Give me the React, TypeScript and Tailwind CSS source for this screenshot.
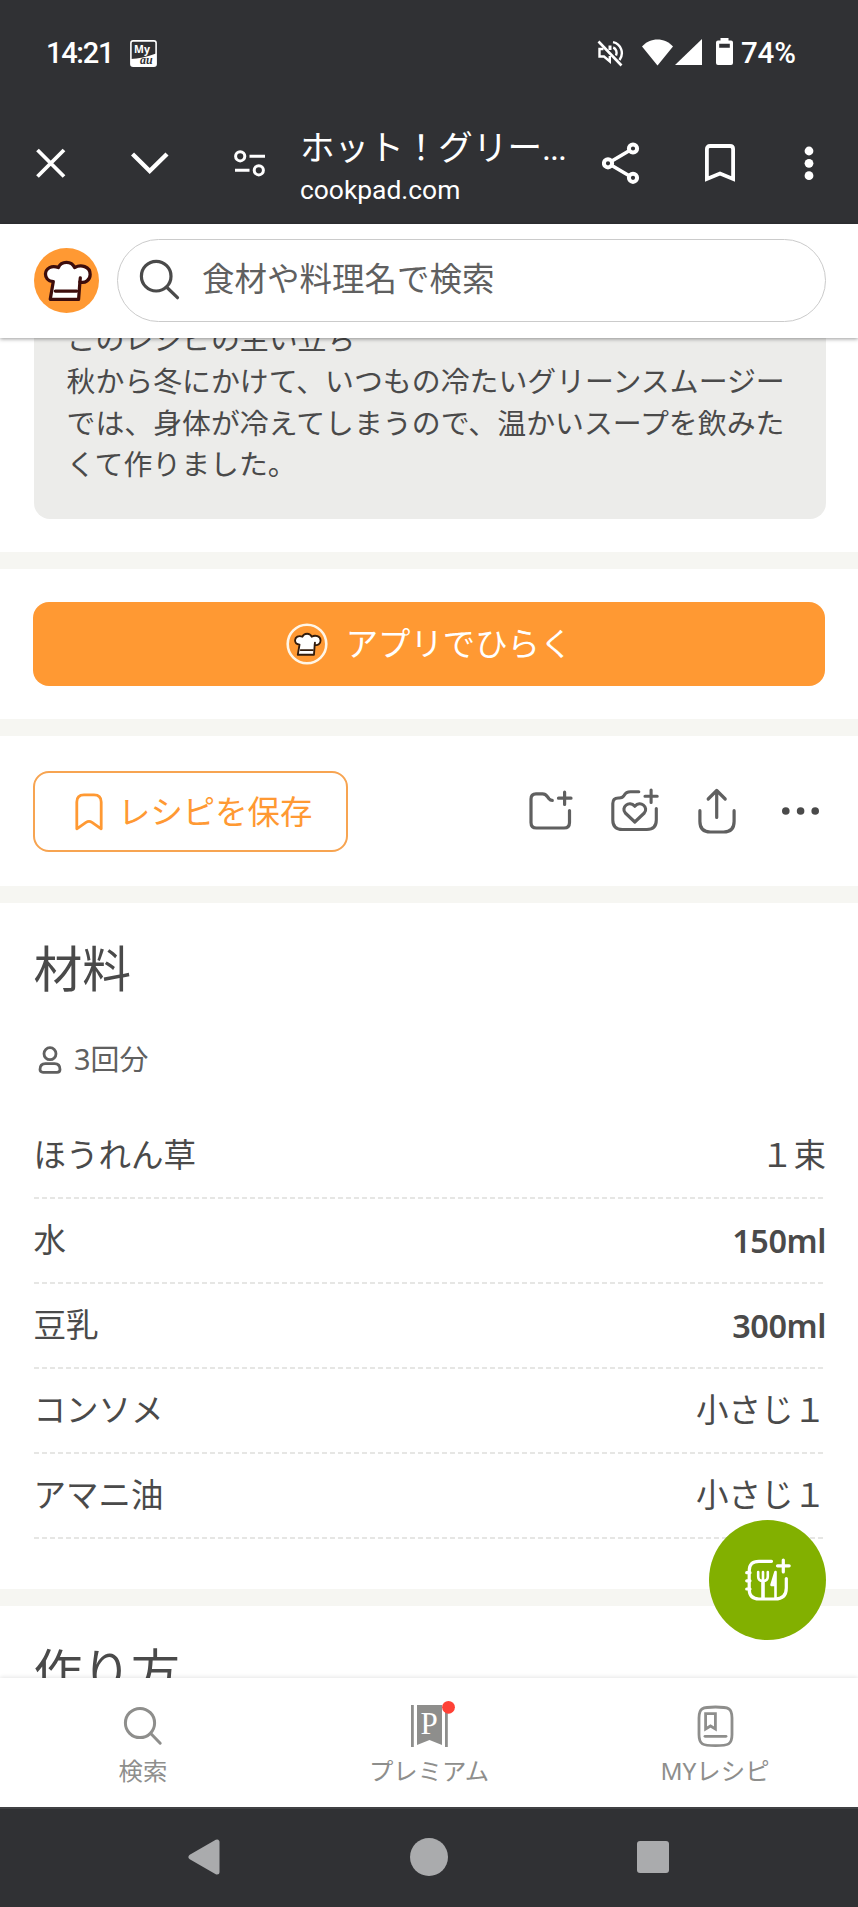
import React from 'react';

type Ingredient = {
  name: string;
  amount: string;
  bold?: boolean;
};

const INGREDIENTS: Ingredient[] = [
  { name: 'ほうれん草', amount: '１束' },
  { name: '水', amount: '150ml', bold: true },
  { name: '豆乳', amount: '300ml', bold: true },
  { name: 'コンソメ', amount: '小さじ１' },
  { name: 'アマニ油', amount: '小さじ１' },
];

function ChefHat({ stroke }: { stroke: string }) {
  return (
    <g stroke={stroke} strokeWidth="3.2" strokeLinejoin="round">
      <path
        fill="#fff"
        d="M16 50.5 L19 33 C13 32.5 11.3 28.5 11.3 25.5 C11.5 20 17.5 16.5 24 19.3 C25.5 15.8 28.5 14.2 32 14.2 C35.5 14.2 38.5 16 40 19.3 C46 15.8 55.3 18 55.3 26 C55.3 31.5 50.5 35 45.2 33.5 L43.9 50.5 Z"
      />
      <path fill="none" strokeLinecap="round" d="M21 42.4 H42 M45.2 33.5 L45.6 29.5" />
    </g>
  );
}

function StatusBar() {
  return (
    <div className="flex h-[104px] items-start pt-[36px] pl-[46px] pr-[57px] text-white">
      <span className="w-[84px] text-[29px] leading-[34px] font-medium tracking-[-1.3px]">14:21</span>
      <svg width="27" height="27" viewBox="0 0 27 27" className="mt-1">
        <rect x="0.9" y="0.9" width="25.2" height="25.2" rx="2.2" fill="none" stroke="#fff" strokeWidth="1.6" />
        <path d="M0.9 19 C8 19 17 17 26.1 13.6 V26.1 H0.9 Z" fill="#fff" />
        <text x="4" y="12.8" fill="#fff" fontSize="10.5" fontWeight="700" fontFamily="Open Sans, sans-serif">My</text>
        <text x="10" y="23.8" fill="#303134" fontSize="12" fontStyle="italic" fontWeight="700" fontFamily="Liberation Serif, serif">au</text>
      </svg>
      <svg width="27" height="27" viewBox="0 0 27 27" className="mt-1 ml-auto" fill="none" stroke="#fff" strokeWidth="2.4">
        <path d="M1.5 1.5 L24.5 25.5" strokeWidth="2.6" />
        <path d="M6.5 9 H2.5 V16.5 H7 L12.8 21.5 V16" />
        <path d="M13 5.5 V10" strokeWidth="3" />
        <path d="M16 2.2 C24 4 27.5 13 22.5 20" />
        <path d="M16.2 7.5 C19 8.5 20.5 12 19 15.5" />
      </svg>
      <svg width="31" height="27" viewBox="0 0 31 27" className="mt-[3px] ml-[18px]">
        <path d="M0 7.5 C8 -2 23 -2 31 7.5 L15.5 26.5 Z" fill="#fff" />
      </svg>
      <svg width="27" height="26" viewBox="0 0 27 26" className="mt-[3px] ml-[2px]">
        <path d="M27 0 V26 H0 Z" fill="#fff" />
      </svg>
      <svg width="17" height="27" viewBox="0 0 17 27" className="mt-[2px] ml-[14px]">
        <path
          fillRule="evenodd"
          fill="#fff"
          d="M4.5 0 H12.5 V2.6 H15 Q17 2.6 17 4.6 V25 Q17 27 15 27 H2 Q0 27 0 25 V4.6 Q0 2.6 2 2.6 H4.5 Z M3.2 5.8 V9.8 H13.8 V5.8 Z"
        />
      </svg>
      <span className="ml-[8px] w-[60px] text-[29.5px] leading-[34px] font-medium tracking-[-0.2px] whitespace-nowrap">74%</span>
    </div>
  );
}

function BrowserToolbar() {
  return (
    <div className="flex h-[120px] items-start pl-[36px] text-white">
      <svg width="30" height="30" viewBox="0 0 30 30" className="mt-[44px]">
        <path d="M1.5 2 L28 28.5 M28 2 L1.5 28.5" stroke="#fff" strokeWidth="3.8" />
      </svg>
      <svg width="38" height="23" viewBox="0 0 38 23" className="mt-[48px] ml-[65px]">
        <path d="M1.5 2 L18.7 19 L36 2" fill="none" stroke="#fff" strokeWidth="4.4" />
      </svg>
      <svg width="32" height="27" viewBox="0 0 32 27" className="mt-[46px] ml-[65px]" fill="none" stroke="#fff" strokeWidth="3">
        <circle cx="6.2" cy="6.3" r="4.6" />
        <path d="M15.5 6.3 H31 M1 20.3 H15.5" />
        <circle cx="24.8" cy="20.3" r="4.6" />
      </svg>
      <div className="mt-[21px] ml-[34px] flex w-[302px] flex-col whitespace-nowrap">
        <span className="text-[34.6px] leading-[46px] font-[Roboto,'Noto_Sans_CJK_JP',sans-serif]">
          ホット！グリー<span className="tracking-[-1.2px]">...</span>
        </span>
        <span className="mt-[3px] text-[26.4px] leading-[32px]">cookpad.com</span>
      </div>
      <svg width="38" height="43" viewBox="0 0 38 43" className="mt-[38px]" fill="none" stroke="#fff" strokeWidth="4">
        <path d="M6 21.3 L31 6.5 M6 21.3 L31 36" strokeWidth="3.6" />
        <circle cx="6" cy="21.3" r="4.1" fill="#303134" />
        <circle cx="31" cy="6.5" r="4.1" fill="#303134" />
        <circle cx="31" cy="35.8" r="4.1" fill="#303134" />
      </svg>
      <svg width="30" height="38" viewBox="0 0 30 38" className="mt-[40px] ml-[65px]">
        <path d="M1.9 35 V5 Q1.9 2 5 2 H25 Q28.1 2 28.1 5 V35 L15 29.5 Z" fill="none" stroke="#fff" strokeWidth="3.8" />
      </svg>
      <svg width="10" height="36" viewBox="0 0 10 36" className="mt-[41px] ml-[69px]" fill="#fff">
        <circle cx="5" cy="6" r="4.4" />
        <circle cx="5" cy="18.3" r="4.4" />
        <circle cx="5" cy="30.7" r="4.4" />
      </svg>
    </div>
  );
}

function SearchHeader() {
  return (
    <header className="relative z-10 flex h-[114px] shrink-0 items-start bg-white pl-[34px] shadow-[0_1px_4px_rgba(0,0,0,0.4)]">
      <svg width="65" height="65" viewBox="0 0 64 64" className="mt-[24px]">
        <circle cx="32" cy="32" r="32" fill="#ff9933" />
        <ChefHat stroke="#3d0d0c" />
      </svg>
      <div className="mt-[15px] ml-[18px] flex h-[83px] w-[709px] items-center rounded-full border-[1.5px] border-[#cbcbcb] bg-white pl-[21px]">
        <svg width="41" height="41" viewBox="0 0 41 41" fill="none" stroke="#4a4a4a" strokeWidth="3.2" strokeLinecap="round" className="-mt-[2px]">
          <circle cx="17.2" cy="17.2" r="14.8" />
          <path d="M28 28.5 L38.5 38.7" />
        </svg>
        <span className="-mt-[3px] ml-[22px] text-[32.5px] leading-[48px] text-[#606060]">食材や料理名で検索</span>
      </div>
    </header>
  );
}

function ActionIcons() {
  return (
    <div className="ml-auto flex items-start text-[#606060]">
      <svg width="44" height="46" viewBox="0 0 44 46" fill="none" stroke="currentColor" strokeWidth="3.2" strokeLinecap="round" strokeLinejoin="round">
        <path d="M40.5 22.5 V34.5 Q40.5 40 35 40 H7.5 Q2 40 2 34.5 V11 Q2 5.8 7 5.8 H13.5 Q16.5 5.8 18.3 8.5 L20 10.8 Q21.3 12.4 23.3 12.4" />
        <path d="M29.5 10.2 H42 M35.6 4.2 V16.5" />
      </svg>
      <svg width="48" height="46" viewBox="0 0 48 46" fill="none" stroke="currentColor" strokeWidth="3.1" strokeLinecap="round" strokeLinejoin="round" className="ml-[38px]">
        <path d="M45.3 20.5 V32 Q45.3 41.5 35.8 41.5 H11.3 Q1.8 41.5 1.8 32 V15.5 Q1.8 10 7.3 10 Q11.5 10.3 13.2 7.3 Q15 3.8 19.5 3.8 H27.8" />
        <path d="M34 8.2 H46.2 M40.1 2 V14.5" />
        <path d="M23.8 34 L14.3 25 C9.5 19.5 18 11.8 23.8 18.3 C29.5 11.8 38 19.5 33.3 25 Z" />
      </svg>
      <svg width="38" height="46" viewBox="0 0 38 46" fill="none" stroke="currentColor" strokeWidth="3.2" strokeLinecap="round" strokeLinejoin="round" className="ml-[39px]">
        <path d="M1.9 22.7 V33.5 Q1.9 44 12.4 44 H25.6 Q36.1 44 36.1 33.5 V22.7" />
        <path d="M18.7 29.5 V2.5 M10.2 11 L18.7 2.5 L27.2 11" />
      </svg>
      <svg width="40" height="46" viewBox="0 0 40 46" fill="#4a4a4a" className="ml-[45px]">
        <circle cx="4.8" cy="23" r="3.8" />
        <circle cx="19.6" cy="23" r="3.8" />
        <circle cx="34.2" cy="23" r="3.8" />
      </svg>
    </div>
  );
}

function TabBar() {
  return (
    <nav className="relative z-10 grid h-[129px] shrink-0 grid-cols-3 bg-white pt-[27px] text-[24.4px] leading-[34px] text-[#8e8e8c] shadow-[0_-1px_4px_rgba(0,0,0,0.1)]">
      <div className="flex flex-col items-center">
        <svg width="40" height="42" viewBox="0 0 40 42" fill="none" stroke="currentColor" strokeWidth="3" strokeLinecap="round">
          <circle cx="17" cy="18" r="14.6" />
          <path d="M28 28.8 L37.2 38.2" />
        </svg>
        <span className="mt-[7px]">検索</span>
      </div>
      <div className="flex flex-col items-center">
        <svg width="54" height="48" viewBox="0 0 54 48" className="-mt-[6px] overflow-visible">
          <path d="M9 6 H11.8 V48 H9 Z M43 6 H45.8 V48 H43 Z M15 6 H40 V46 L27.5 41 L15 46 Z" fill="currentColor" />
          <text x="18.5" y="35" fontSize="31" fill="#fff" fontFamily="Liberation Serif, serif">P</text>
          <circle cx="46.5" cy="8.3" r="6.4" fill="#ff4136" />
        </svg>
        <span className="mt-[7px]">プレミアム</span>
      </div>
      <div className="flex flex-col items-center">
        <svg width="37" height="42" viewBox="0 0 37 42" fill="none" stroke="currentColor" strokeWidth="2.8" strokeLinejoin="round">
          <path d="M18.5 2 C31.5 2 35 3 35 13 V29.6 C35 39.6 31.5 40.6 18.5 40.6 C5.5 40.6 2 39.6 2 29.6 V13 C2 3 5.5 2 18.5 2 Z" />
          <path d="M8.6 8.7 H18.4 V24 L13.5 21 L8.6 24 Z" strokeLinejoin="miter" />
          <path d="M8 31.3 H29" strokeLinecap="round" />
        </svg>
        <span className="mt-[7px]">MYレシピ</span>
      </div>
    </nav>
  );
}

export default function App() {
  return (
    <div className="relative flex h-[1907px] w-[858px] flex-col overflow-hidden bg-white font-['Noto_Sans','Noto_Sans_CJK_JP',sans-serif] text-[#4a4a4a]" lang="ja">
      <div className="shrink-0 bg-[#303134] font-[Roboto,'Noto_Sans_CJK_JP',sans-serif]">
        <StatusBar />
        <BrowserToolbar />
      </div>
      <SearchHeader />

      <main className="h-[1340px] shrink-0 overflow-hidden">
        <div className="mr-[32px] ml-[33.5px] -mt-[40px] h-[221px] rounded-2xl bg-[#ececea] pt-[20px] pl-[33px] text-[28.9px] leading-[41.8px] whitespace-nowrap">
          <p>このレシピの生い立ち</p>
          <p>秋から冬にかけて、いつもの冷たいグリーンスムージー</p>
          <p>では、身体が冷えてしまうので、温かいスープを飲みた</p>
          <p>くて作りました。</p>
        </div>

        {/* Open in app */}
        <section className="mt-[33px] border-y-[17px] border-[#f6f6f2] px-[33px] py-[33px]">
          <button className="flex h-[84px] w-full items-center justify-center rounded-2xl bg-[#ff9933] text-[32.4px] text-white">
            <svg width="42" height="42" viewBox="0 0 42 42">
              <circle cx="21" cy="21" r="19.3" fill="none" stroke="#fff6e8" strokeWidth="2.6" />
              <g transform="translate(2.5 2.5) scale(0.58)">
                <ChefHat stroke="#331c0c" />
              </g>
            </svg>
            <span className="-mt-[1px] ml-[18px]">アプリでひらく</span>
          </button>
        </section>

        {/* Save and share actions */}
        <section className="flex h-[150px] items-start px-[33px] pt-[35px]">
          <button className="flex h-[81px] w-[315px] items-center rounded-2xl border-2 border-[#f7a451] pl-[40px] text-[32.4px] text-[#ff9933]">
            <svg width="28" height="38" viewBox="0 0 28 38">
              <path d="M1.8 35.8 V9 Q1.8 1.8 9 1.8 H19 Q26.2 1.8 26.2 9 V35.8 L17 29.3 Q14 27.3 11 29.3 Z" fill="none" stroke="currentColor" strokeWidth="2.8" strokeLinejoin="round" />
            </svg>
            <span className="ml-[15px]">レシピを保存</span>
          </button>
          <div className="ml-auto pt-[17px] pr-[4px]">
            <ActionIcons />
          </div>
        </section>

        {/* Ingredients */}
        <section className="h-[720px] border-y-[17px] border-[#f6f6f2] pr-[32px] pl-[33.5px]">
          <h2 className="mt-[31px] text-[48.8px] leading-[68px]">材料</h2>
          <div className="mt-[36px] flex h-[44px] items-center text-[28.9px] text-[#606060]">
            <svg width="24" height="28" viewBox="0 0 24 28" fill="none" stroke="currentColor" strokeWidth="2.8" className="-mt-[1px] ml-[4.5px]">
              <circle cx="12" cy="7.7" r="6" />
              <path d="M7.5 17.6 H16.5 Q22 17.6 22 23.5 Q22 26.3 19 26.3 H5 Q2 26.3 2 23.5 Q2 17.6 7.5 17.6 Z" />
            </svg>
            <span className="-mt-[3px] ml-[12px]">3回分</span>
          </div>
          <ul className="mt-[32px]">
            {INGREDIENTS.map((item, i) => (
              <li
                key={i}
                className="flex h-[85px] items-center justify-between bg-[repeating-linear-gradient(90deg,#e6e6e4_0_5px,transparent_5px_8px)] bg-[length:100%_2px] bg-bottom bg-no-repeat pb-[2px] text-[32.5px]"
              >
                <span>{item.name}</span>
                <span className={item.bold ? 'text-[32.4px] font-semibold tracking-[-0.4px]' : ''}>{item.amount}</span>
              </li>
            ))}
          </ul>
        </section>

        {/* Steps */}
        <section className="pt-[31px] pl-[33.5px]">
          <h2 className="text-[48.8px] leading-[68px]">作り方</h2>
        </section>
      </main>

      <TabBar />

      {/* System navigation */}
      <div className="relative z-10 flex h-[100px] shrink-0 items-center border-t-2 border-[#404144] bg-[#303134] pb-[2px] pl-[188px]">
        <svg width="32" height="36" viewBox="0 0 32 36">
          <path d="M3 18 L29 3 V33 Z" fill="#aaabad" stroke="#aaabad" strokeWidth="5" strokeLinejoin="round" />
        </svg>
        <div className="ml-[190px] h-[38px] w-[38px] rounded-full bg-[#aaabad]" />
        <div className="ml-[189px] h-[32px] w-[32px] rounded-[3px] bg-[#aaabad]" />
      </div>

      {/* Floating post button */}
      <button className="absolute top-[1520px] left-[709px] z-20 flex h-[120px] w-[117px] items-center justify-center rounded-[50%] bg-[#82b000]">
        <svg width="46" height="44" viewBox="0 0 46 44" fill="none" stroke="#fff" strokeWidth="3.2" strokeLinecap="round" strokeLinejoin="round">
          <path d="M26.5 3.3 H14 Q4.2 3.3 4.2 13 V31 Q4.2 41 14 41 H30 Q41.3 41 41.3 30 V20.5" />
          <path d="M1.7 14.7 H5 M1.7 22.8 H5 M1.7 31 H5" />
          <path d="M32.5 7.8 H44.2 M38.3 2 V14" />
          <path d="M18 24 V40" strokeWidth="3.6" />
          <path d="M13.2 14 V18.5 Q13.2 23 18 23 Q22.8 23 22.8 18.5 V14 M18 14 V23" strokeWidth="2.6" />
          <path d="M30.5 14 V40 M30.5 14 L26.5 27 H30" fill="#fff" strokeWidth="2.6" />
        </svg>
      </button>
    </div>
  );
}
